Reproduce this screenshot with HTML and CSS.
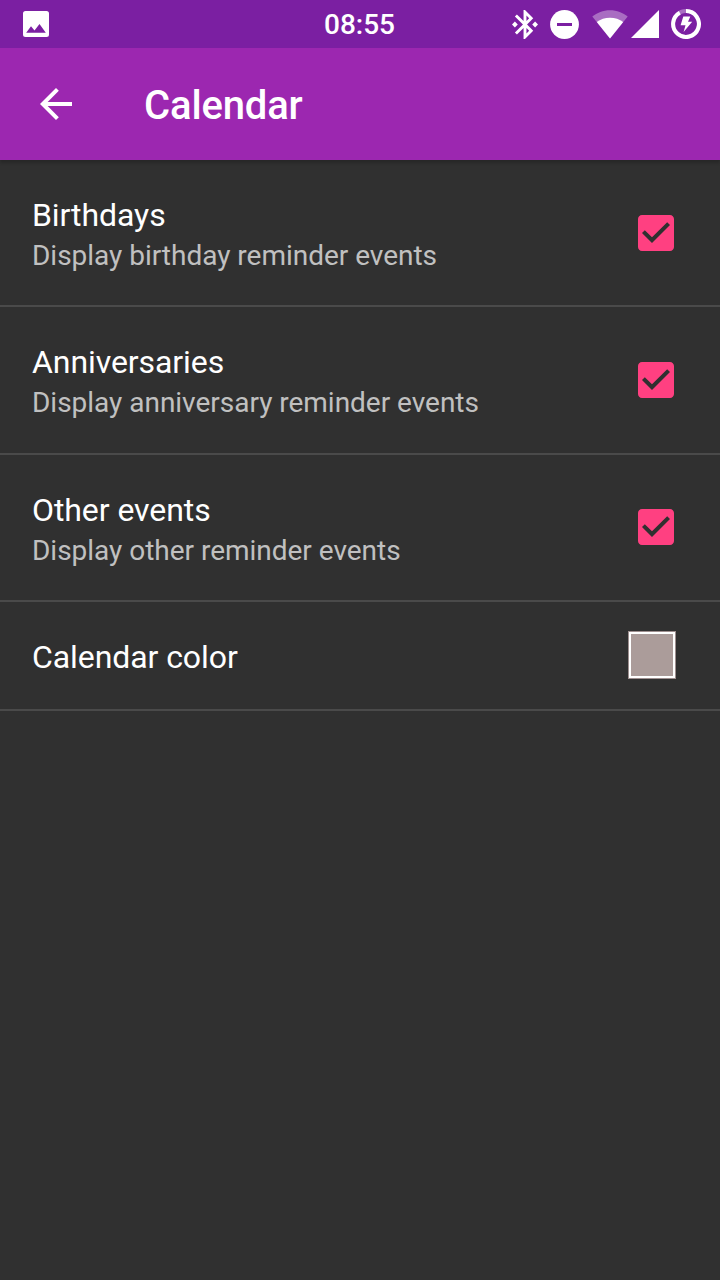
FILE: index.html
```html
<!DOCTYPE html>
<html lang="en">
<head>
<meta charset="utf-8">
<title>Calendar</title>
<link rel="stylesheet" href="styles.css">
</head>
<body>
<header class="status">
  <svg class="picture" viewBox="0 0 26 26"><path fill="#fff" fill-rule="evenodd" d="M2.500 0h21A2.500 2.500 0 0 1 26 2.500v21a2.500 2.500 0 0 1-2.500 2.500h-21A2.500 2.500 0 0 1 0 23.500v-21A2.500 2.500 0 0 1 2.500 0zM3.200 21.700h19.600L16.500 13l-5 6.500L8 15.200z"/></svg>
  <time class="clock">08:55</time>
  <div class="indicators">
    <svg class="bluetooth" viewBox="3 2 18 20"><path fill="#fff" d="M7 12l-2-2-2 2 2 2 2-2zm10.710-4.290L12 2h-1v7.590L6.410 5 5 6.410 10.590 12 5 17.590 6.410 19 11 14.410V22h1l5.710-5.710-4.300-4.290 4.300-4.290zM13 5.830l1.880 1.880L13 9.590V5.830zm1.880 10.460L13 18.170v-3.760l1.880 1.880zM19 10l-2 2 2 2 2-2-2-2z"/></svg>
    <svg class="dnd" viewBox="0 0 29 29"><circle cx="14.500" cy="14.500" r="14.400" fill="#fff"/><path fill="#7b1fa2" d="M7 13h15v3H7z"/></svg>
    <svg class="wifi" viewBox="0 0 36 29"><path fill="#fff" opacity=".35" d="M0.300 6.500C5 2.700 11 .2 18 .2S31 2.700 35.700 6.500L18 28.500z"/><path fill="#fff" d="M4.800 12C8.500 9.200 13 7.700 18 7.700s9.500 1.500 13.200 4.300L18 28.500z"/></svg>
    <svg class="signal" viewBox="0 0 28 28"><path fill="#fff" d="M0 28H28V0z"/></svg>
    <svg class="battery" viewBox="0 0 30 30"><circle cx="15" cy="15" r="12.900" fill="none" stroke="#fff" stroke-opacity=".35" stroke-width="4"/><path fill="none" stroke="#fff" stroke-width="4" d="M15 2.100A12.900 12.900 0 1 1 8.800 3.700"/><path fill="#fff" d="M12.300 7.500h7l-2.300 5.300h4.200L12.600 23l1.900-6.700H9.600z"/></svg>
  </div>
</header>
<nav class="toolbar">
  <svg class="back" viewBox="4 4 16 16"><path fill="#fff" d="M20 11H7.830l5.590-5.590L12 4l-8 8 8 8 1.410-1.410L7.830 13H20z"/></svg>
  <h1 class="heading">Calendar</h1>
</nav>
<main class="settings">
  <section class="row">
    <div class="label"><h2 class="name">Birthdays</h2><p class="summary">Display birthday reminder events</p></div>
    <svg class="check" viewBox="3 3 18 18"><path fill="#ff4081" d="M19 3H5c-1.110 0-2 .9-2 2v14c0 1.100.89 2 2 2h14c1.110 0 2-.9 2-2V5c0-1.100-.89-2-2-2zm-9 14l-5-5 1.410-1.410L10 14.170l7.590-7.590L19 8l-9 9z"/></svg>
  </section>
  <section class="row">
    <div class="label"><h2 class="name">Anniversaries</h2><p class="summary">Display anniversary reminder events</p></div>
    <svg class="check" viewBox="3 3 18 18"><path fill="#ff4081" d="M19 3H5c-1.110 0-2 .9-2 2v14c0 1.100.89 2 2 2h14c1.110 0 2-.9 2-2V5c0-1.100-.89-2-2-2zm-9 14l-5-5 1.410-1.410L10 14.170l7.590-7.590L19 8l-9 9z"/></svg>
  </section>
  <section class="row">
    <div class="label"><h2 class="name">Other events</h2><p class="summary">Display other reminder events</p></div>
    <svg class="check" viewBox="3 3 18 18"><path fill="#ff4081" d="M19 3H5c-1.110 0-2 .9-2 2v14c0 1.100.89 2 2 2h14c1.110 0 2-.9 2-2V5c0-1.100-.89-2-2-2zm-9 14l-5-5 1.410-1.410L10 14.170l7.590-7.590L19 8l-9 9z"/></svg>
  </section>
  <section class="row row-color">
    <h2 class="name">Calendar color</h2>
    <span class="swatch"></span>
  </section>
</main>
</body>
</html>
```
FILE: styles.css
```css
* { box-sizing: border-box; margin: 0; }
body {
  height: 1280px;
  background: #303030;
  color: #fff;
  font-family: Roboto, sans-serif;
  overflow: hidden;
}
svg { display: block; flex: none; }
.status {
  display: grid;
  grid-template-columns: 1fr auto 1fr;
  align-items: center;
  height: 48px;
  padding: 0 19px 0 23px;
  background: #7b1fa2;
}
.picture { width: 26px; height: 26px; }
.clock { font-size: 28px; font-weight: 500; line-height: 46px; padding-top: 2px; margin-right: 5px; }
.indicators { display: flex; align-items: center; justify-content: flex-end; }
.bluetooth { width: 26px; height: 29px; margin-right: 12px; }
.dnd { width: 29px; height: 29px; margin-right: 13px; }
.wifi { width: 36px; height: 29px; margin-right: 3px; }
.signal { width: 28px; height: 28px; margin-right: 12px; }
.battery { width: 30px; height: 30px; }
.toolbar {
  display: flex;
  align-items: center;
  height: 112px;
  padding-left: 40px;
  background: #9c27b0;
  box-shadow: 0 3px 3px rgba(0, 0, 0, .2);
}
.back { width: 32px; height: 32px; }
.heading { margin-left: 72px; padding-top: 4px; font-size: 40px; font-weight: 500; line-height: 48px; letter-spacing: -.15px; }
.row {
  display: flex;
  justify-content: space-between;
  align-items: center;
  height: 147.33px;
  padding: 0 46px 0 32px;
  border-bottom: 2px solid #4a4a4a;
}
.name { font-size: 32px; font-weight: 400; line-height: 40px; letter-spacing: -.08px; }
.label { padding-top: 7px; }
.summary { font-size: 28px; line-height: 42px; letter-spacing: -.02px; color: #c0c0c0; }
.check { width: 36px; height: 36px; }
.row-color { height: 109px; padding-right: 44px; }
.row-color .name { padding-top: 3px; }
.swatch {
  width: 48px;
  height: 48px;
  border: 1px solid #9e8f8f;
  background: #ab9c9a;
  box-shadow: inset 0 0 0 2px #fff;
}
```
